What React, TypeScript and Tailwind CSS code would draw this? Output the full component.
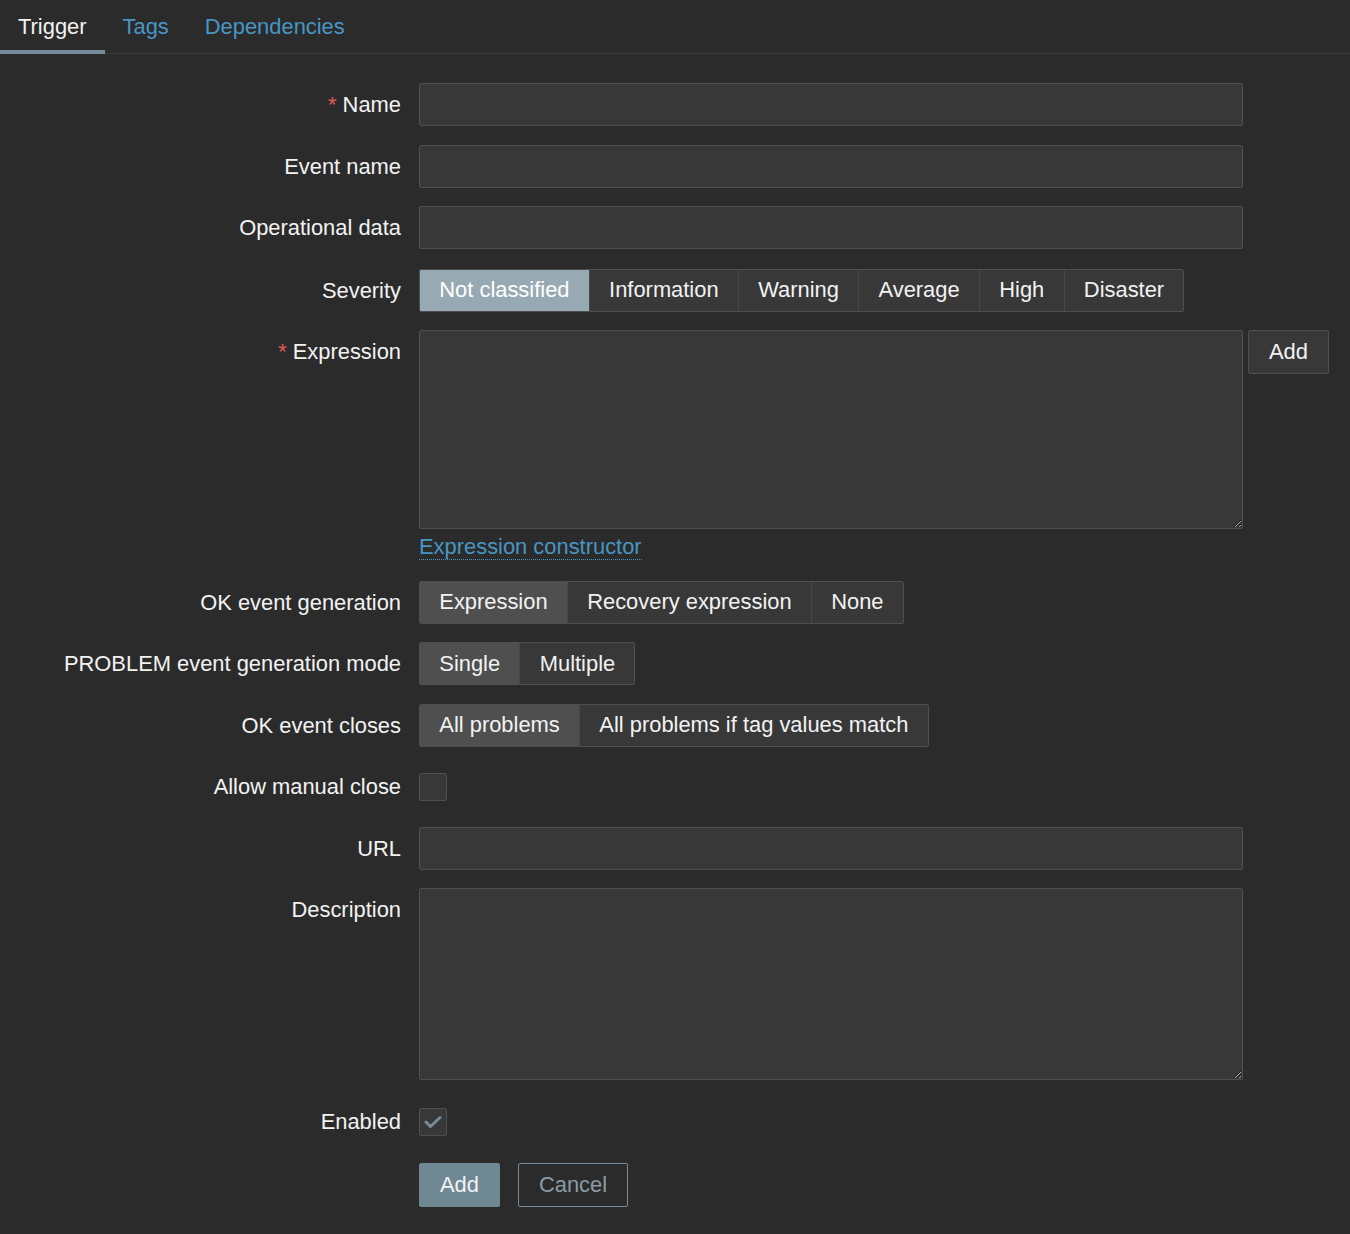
import { useState } from "react";

const font = { fontFamily: '"Liberation Sans", Arial, sans-serif' };

function Label({ text, required, tall }: { text: string; required?: boolean; tall?: boolean }) {
  return (
    <div
      className={`flex w-[401px] shrink-0 items-center justify-end self-start pt-[2px] text-right ${
        tall ? "h-[46px]" : "h-[43px]"
      }`}
    >
      {required && <span className="mr-[6px] text-[#e45959]">*</span>}
      <span>{text}</span>
    </div>
  );
}

function TextInput() {
  return (
    <input
      type="text"
      className="h-[43px] w-[824px] rounded-[2px] border border-[#4f4f4f] bg-[#383838] px-2 text-[#f2f2f2] outline-none"
    />
  );
}

function Segmented({
  options,
  value,
  selectedClass,
}: {
  options: string[];
  value: string;
  selectedClass: string;
}) {
  const [current, setCurrent] = useState(value);
  return (
    <div className="flex h-[43px] overflow-hidden rounded-[2px] border border-[#4f4f4f] bg-[#383838]">
      {options.map((o, i) => (
        <button
          key={o}
          type="button"
          onClick={() => setCurrent(o)}
          className={`flex items-center px-[19.3px] pt-[1px] ${i > 0 ? "border-l border-[#474747]" : ""} ${
            current === o ? selectedClass : "text-[#f2f2f2]"
          }`}
        >
          {o}
        </button>
      ))}
    </div>
  );
}

function Checkbox({ checked }: { checked?: boolean }) {
  const [on, setOn] = useState(!!checked);
  return (
    <button
      type="button"
      onClick={() => setOn(!on)}
      className="flex h-[28px] w-[28px] items-center justify-center rounded-[2px] border border-[#4f4f4f] bg-[#383838]"
    >
      {on && (
        <svg width="18" height="14" viewBox="0 0 18 14" fill="none">
          <polyline
            points="2,7 6.5,11.5 16,2.5"
            stroke="#768d99"
            strokeWidth="3"
            strokeLinecap="round"
            strokeLinejoin="round"
          />
        </svg>
      )}
    </button>
  );
}

export default function App() {
  const tabs = ["Trigger", "Tags", "Dependencies"];
  const [tab, setTab] = useState("Trigger");

  return (
    <div className="min-h-screen bg-[#2b2b2b] text-[21.9px] text-[#f2f2f2]" style={font}>
      <div className="flex h-[54px] border-b border-[#3a3a3a]">
        {tabs.map((t) => (
          <button
            key={t}
            type="button"
            onClick={() => setTab(t)}
            className={`-mb-px flex items-center border-b-[4px] px-[18px] pt-[4px] ${
              tab === t ? "border-[#768d99] text-[#f2f2f2]" : "border-transparent text-[#4796c4]"
            }`}
          >
            {t}
          </button>
        ))}
      </div>

      <form className="flex flex-col gap-[18.5px] pt-[29px] pb-[27px]">
        <div className="flex gap-[18px]">
          <Label text="Name" required />
          <TextInput />
        </div>
        <div className="flex gap-[18px]">
          <Label text="Event name" />
          <TextInput />
        </div>
        <div className="flex gap-[18px]">
          <Label text="Operational data" />
          <TextInput />
        </div>
        <div className="flex gap-[18px] pt-[1px]">
          <Label text="Severity" />
          <Segmented
            options={["Not classified", "Information", "Warning", "Average", "High", "Disaster"]}
            value="Not classified"
            selectedClass="bg-[#97aab3] text-[#ffffff]"
          />
        </div>
        <div className="flex gap-[18px]">
          <Label text="Expression" required />
          <div className="flex flex-col">
            <div className="flex items-start gap-[5px]">
              <textarea className="h-[199px] w-[824px] rounded-[2px] border border-[#4f4f4f] bg-[#383838] p-2 text-[#f2f2f2] outline-none" />
              <button
                type="button"
                className="h-[44px] w-[81px] rounded-[2px] border border-[#4f4f4f] bg-[#383838] text-[#f2f2f2]"
              >
                Add
              </button>
            </div>
            <div className="flex h-[33px] items-center pt-[3px]">
              <a className="cursor-pointer border-b border-dotted border-[#4796c4] leading-[24px] text-[#4796c4]">
                Expression constructor
              </a>
            </div>
          </div>
        </div>
        <div className="flex gap-[18px]">
          <Label text="OK event generation" />
          <Segmented
            options={["Expression", "Recovery expression", "None"]}
            value="Expression"
            selectedClass="bg-[#4f4f4f] text-[#f2f2f2]"
          />
        </div>
        <div className="flex gap-[18px]">
          <Label text="PROBLEM event generation mode" />
          <Segmented
            options={["Single", "Multiple"]}
            value="Single"
            selectedClass="bg-[#4f4f4f] text-[#f2f2f2]"
          />
        </div>
        <div className="flex gap-[18px]">
          <Label text="OK event closes" />
          <Segmented
            options={["All problems", "All problems if tag values match"]}
            value="All problems"
            selectedClass="bg-[#4f4f4f] text-[#f2f2f2]"
          />
        </div>
        <div className="flex gap-[18px]">
          <Label text="Allow manual close" />
          <div className="flex h-[43px] items-center">
            <Checkbox />
          </div>
        </div>
        <div className="flex gap-[18px]">
          <Label text="URL" />
          <TextInput />
        </div>
        <div className="flex gap-[18px]">
          <Label text="Description" />
          <textarea className="h-[192px] w-[824px] rounded-[2px] border border-[#4f4f4f] bg-[#383838] p-2 text-[#f2f2f2] outline-none" />
        </div>
        <div className="flex gap-[18px]">
          <Label text="Enabled" tall />
          <div className="flex h-[46px] items-center">
            <Checkbox checked />
          </div>
        </div>
        <div className="flex gap-[18px]">
          <div className="w-[401px] shrink-0" />
          <button
            type="button"
            className="h-[44px] w-[81px] rounded-[2px] border border-[#6f8894] bg-[#6f8894] pt-[1px] text-[#f2f2f2]"
          >
            Add
          </button>
          <button
            type="button"
            className="h-[44px] w-[110px] rounded-[2px] border border-[#768d99] bg-transparent pt-[1px] text-[#8b9ca6]"
          >
            Cancel
          </button>
        </div>
      </form>
    </div>
  );
}
